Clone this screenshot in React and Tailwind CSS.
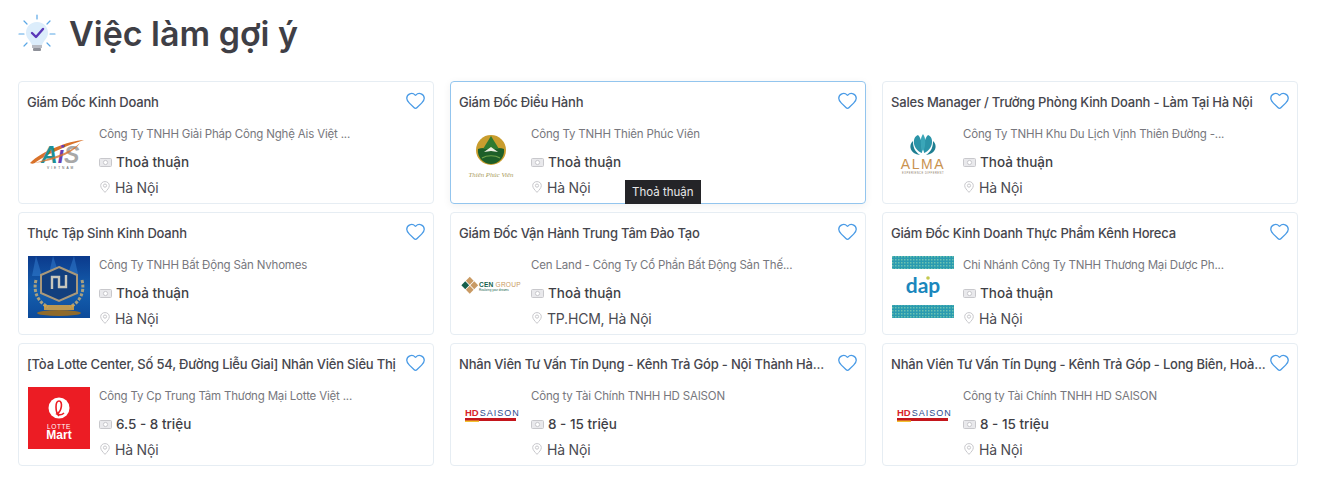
import { Heart } from "lucide-react";

const AisLogo = () => (
  <svg viewBox="0 0 62 62" className="h-full w-full">
    <path d="M2 38 C 14 26, 40 16, 56 15 C 44 19, 20 28, 8 37 C 6 39, 4 39, 2 38Z" fill="#d9722a" />
    <text x="13" y="38" fontFamily="Liberation Sans" fontStyle="italic" fontWeight="700" fontSize="23">
      <tspan fill="#1f8f96">A</tspan>
      <tspan fill="#6a3fb0">i</tspan>
      <tspan fill="#a8a8a8">S</tspan>
    </text>
    <path d="M6 38 C 20 34, 42 28, 52 18 C 46 28, 26 36, 6 38Z" fill="#d9722a" opacity="0.8" />
    <text x="19" y="44" fontFamily="Liberation Sans" fontSize="3.2" letterSpacing="2" fill="#555">VIETNAM</text>
  </svg>
);

const ThienPhucLogo = () => (
  <svg viewBox="0 0 62 62" className="h-full w-full">
    <circle cx="31" cy="25" r="15" fill="#c99d2e" />
    <path d="M18 24 C 24 22, 38 22, 44 24 C 45 32, 39 39, 31 39 C 23 39, 17 32, 18 24Z" fill="#1d5f28" />
    <path d="M31 11 L39 24 L23 24Z" fill="#2f7a30" />
    <path d="M24 27 L31 22 L38 27 L31 26Z" fill="#eef0e2" />
    <path d="M22 33 C 27 30, 35 30, 40 33" fill="none" stroke="#6fa24a" strokeWidth="1.2" />
    <text x="31" y="52" textAnchor="middle" fontFamily="Liberation Serif" fontStyle="italic" fontSize="6.8" fill="#a89a5a">Thiên Phúc Viên</text>
  </svg>
);

const AlmaLogo = () => (
  <svg viewBox="0 0 62 62" className="h-full w-full">
    <path d="M26 10 C 20 12, 20 24, 30 28 C 30 20, 30 14, 26 10Z M36 10 C 42 12, 42 24, 32 28 C 32 20, 32 14, 36 10Z" fill="#2b94a8" />
    <path d="M31 9 C 28 13, 28 20, 31 27 C 34 20, 34 13, 31 9Z" fill="#3aa6b8" />
    <path d="M21 16 C 16 20, 18 29, 28 30 C 22 26, 21 21, 21 16Z M41 16 C 46 20, 44 29, 34 30 C 40 26, 41 21, 41 16Z" fill="#1f7f92" />
    <text x="31" y="44" textAnchor="middle" fontFamily="Liberation Sans" fontSize="14" letterSpacing="1.6" fill="#c9924f">ALMA</text>
    <text x="31" y="49" textAnchor="middle" fontFamily="Liberation Sans" fontSize="2.6" letterSpacing="0.5" fill="#8a7a66">EXPERIENCE DIFFERENT</text>
  </svg>
);

const NvhomesLogo = () => (
  <svg viewBox="0 0 62 62" className="h-full w-full">
    <defs>
      <linearGradient id="nv-bg" x1="0" x2="0" y1="0" y2="1">
        <stop offset="0" stopColor="#0b3a8c" />
        <stop offset="0.55" stopColor="#155fae" />
        <stop offset="1" stopColor="#0c4a9a" />
      </linearGradient>
    </defs>
    <rect width="62" height="62" fill="url(#nv-bg)" />
    <path d="M8 0 L14 20 H4Z M25 0 L31 18 H21Z M46 0 L50 18 H40Z" fill="#3f8fe0" opacity="0.4" />
    <path d="M31 11 L49 19 V37 L31 45 L13 37 V19Z" fill="#123f7e" stroke="#a9987a" strokeWidth="2" />
    <path d="M24 33 V21 H31 V31 H38 V19" fill="none" stroke="#c7c6bc" strokeWidth="2.4" />
    <path d="M8 24 C 5 36, 10 46, 20 51 M54 24 C 57 36, 52 46, 42 51" fill="none" stroke="#a9a07f" strokeWidth="3" strokeDasharray="3 1.5" />
    <ellipse cx="31" cy="57" rx="22" ry="3" fill="#8f6a2a" />
    <rect x="16" y="49" width="30" height="5" fill="#d9a544" opacity="0.85" />
  </svg>
);

const CenLogo = () => (
  <svg viewBox="0 0 62 62" className="h-full w-full">
    <rect x="7" y="22" width="5.5" height="5.5" transform="rotate(45 9.75 24.75)" fill="#c99a63" />
    <rect x="2.5" y="26.5" width="5.5" height="5.5" transform="rotate(45 5.25 29.25)" fill="#155f4c" />
    <rect x="11.5" y="26.5" width="5.5" height="5.5" transform="rotate(45 14.25 29.25)" fill="#c99a63" />
    <rect x="7" y="31" width="5.5" height="5.5" transform="rotate(45 9.75 33.75)" fill="#c99a63" />
    <text x="19" y="31" fontFamily="Liberation Sans" fontSize="6.6" letterSpacing="0.2">
      <tspan fontWeight="700" fill="#155f4c">CEN </tspan>
      <tspan fill="#c99a63">GROUP</tspan>
    </text>
    <text x="19" y="35" fontFamily="Liberation Sans" fontSize="3" fill="#155f4c">Realizing your dreams</text>
  </svg>
);

const DapLogo = () => (
  <svg viewBox="0 0 62 62" className="h-full w-full">
    <defs>
      <pattern id="dap-dots" width="3" height="3" patternUnits="userSpaceOnUse">
        <rect width="3" height="3" fill="#2a9bb0" />
        <rect x="0" y="0" width="1.5" height="1.5" fill="#6cc2b0" />
      </pattern>
    </defs>
    <rect width="62" height="13" fill="url(#dap-dots)" />
    <rect y="49" width="62" height="13" fill="url(#dap-dots)" />
    <text x="31" y="37" textAnchor="middle" fontFamily="Lato" fontWeight="700" fontSize="21" fill="#1b87bd">dap</text>
    <circle cx="36" cy="22" r="1.8" fill="#c4c94f" />
  </svg>
);

const LotteLogo = () => (
  <svg viewBox="0 0 62 62" className="h-full w-full">
    <rect width="62" height="62" fill="#ec1c24" />
    <circle cx="31" cy="21" r="10.5" fill="#fff" />
    <path d="M31 29 C 27 25, 27 14, 31 14 C 35 14, 34 24, 29 27 C 31 28, 34 28, 36 26" fill="none" stroke="#ec1c24" strokeWidth="1.6" />
    <text x="31" y="42" textAnchor="middle" fontFamily="Liberation Sans" fontSize="6.5" letterSpacing="0.6" fill="#fff">LOTTE</text>
    <text x="31" y="52" textAnchor="middle" fontFamily="Liberation Sans" fontWeight="700" fontSize="12" fill="#fff">Mart</text>
  </svg>
);

const HdLogo = () => (
  <svg viewBox="0 0 62 62" className="h-full w-full">
    <text x="5" y="29" fontFamily="Liberation Sans" fontSize="9">
      <tspan fontWeight="700" fontSize="9.5" fill="#d8232a">HD</tspan>
      <tspan letterSpacing="1" fill="#2a4a8c" dx="1">SAISON</tspan>
    </text>
    <rect x="5" y="31" width="51" height="3" fill="#c4161c" />
    <rect x="5" y="33.5" width="14" height="1.5" fill="#f2c230" />
  </svg>
);

const BulbIcon = () => (
  <svg viewBox="0 0 38 40" className="h-[40px] w-[38px]">
    <g stroke="#5aa7e6" strokeWidth="1.2" strokeLinecap="round">
      <path d="M19 1 V5 M1 20 H6 M32 20 H37 M6 7 L9 10 M32 7 L29 10 M6 32 L9 29 M32 32 L29 29" />
    </g>
    <path d="M19 8 C 12 8, 8 13, 8 19 C 8 24, 12 26, 14 31 H24 C 26 26, 30 24, 30 19 C 30 13, 26 8, 19 8Z" fill="#dcedfb" />
    <rect x="14" y="31" width="10" height="3" fill="#b9bcc4" />
    <rect x="15" y="34" width="8" height="3" rx="1" fill="#8e9199" />
    <path d="M14 19 L18 23 L25 15" fill="none" stroke="#5a37b8" strokeWidth="2.4" strokeLinecap="round" strokeLinejoin="round" />
  </svg>
);

const MoneyIcon = () => (
  <svg viewBox="0 0 13 9" className="h-[9px] w-[13px] shrink-0" fill="none" stroke="#c8c8cc" strokeWidth="1">
    <rect x="0.5" y="0.5" width="12" height="8" rx="1" fill="#e9e9ec" />
    <circle cx="6.5" cy="4.5" r="2.1" fill="#fff" />
  </svg>
);

const PinIcon = () => (
  <svg viewBox="0 0 10 12" className="h-[12px] w-[10px] shrink-0" fill="none" stroke="#c8c8cc" strokeWidth="1">
    <path d="M5 11.4 C 2.8 8.8, 0.7 7, 0.7 4.6 C 0.7 2.2, 2.6 0.6, 5 0.6 C 7.4 0.6, 9.3 2.2, 9.3 4.6 C 9.3 7, 7.2 8.8, 5 11.4Z" />
    <circle cx="5" cy="4.6" r="1.6" />
  </svg>
);

const jobs = [
  { title: "Giám Đốc Kinh Doanh", company: "Công Ty TNHH Giải Pháp Công Nghệ Ais Việt ...", salary: "Thoả thuận", place: "Hà Nội", Logo: AisLogo },
  { title: "Giám Đốc Điều Hành", company: "Công Ty TNHH Thiên Phúc Viên", salary: "Thoả thuận", place: "Hà Nội", Logo: ThienPhucLogo, active: true },
  { title: "Sales Manager / Trưởng Phòng Kinh Doanh - Làm Tại Hà Nội", company: "Công Ty TNHH Khu Du Lịch Vịnh Thiên Đường -...", salary: "Thoả thuận", place: "Hà Nội", Logo: AlmaLogo },
  { title: "Thực Tập Sinh Kinh Doanh", company: "Công Ty TNHH Bất Động Sản Nvhomes", salary: "Thoả thuận", place: "Hà Nội", Logo: NvhomesLogo },
  { title: "Giám Đốc Vận Hành Trung Tâm Đào Tạo", company: "Cen Land - Công Ty Cổ Phần Bất Động Sản Thế...", salary: "Thoả thuận", place: "TP.HCM, Hà Nội", Logo: CenLogo },
  { title: "Giám Đốc Kinh Doanh Thực Phẩm Kênh Horeca", company: "Chi Nhánh Công Ty TNHH Thương Mại Dược Ph...", salary: "Thoả thuận", place: "Hà Nội", Logo: DapLogo },
  { title: "[Tòa Lotte Center, Số 54, Đường Liễu Giai] Nhân Viên Siêu Thị", company: "Công Ty Cp Trung Tâm Thương Mại Lotte Việt ...", salary: "6.5 - 8 triệu", place: "Hà Nội", Logo: LotteLogo },
  { title: "Nhân Viên Tư Vấn Tín Dụng - Kênh Trả Góp - Nội Thành Hà...", company: "Công ty Tài Chính TNHH HD SAISON", salary: "8 - 15 triệu", place: "Hà Nội", Logo: HdLogo },
  { title: "Nhân Viên Tư Vấn Tín Dụng - Kênh Trả Góp - Long Biên, Hoà...", company: "Công ty Tài Chính TNHH HD SAISON", salary: "8 - 15 triệu", place: "Hà Nội", Logo: HdLogo },
];

function JobCard({ job }) {
  const { Logo } = job;

  return (
    <div
      className={`relative h-[123px] rounded-[4px] border px-[8px] ${
        job.active
          ? "border-[#93c5ee] shadow-[0_2px_8px_rgba(0,0,0,0.06)]"
          : "border-[#e6edf3]"
      }`}
    >
      <div className="flex h-[43px] items-start justify-between">
        <h3 className="mt-[10px] w-[372px] whitespace-nowrap text-[13px] leading-[20px] font-medium tracking-[-0.2px] text-[#46464d]">
          {job.title}
        </h3>
        <Heart className="mt-[8px] mr-[-1px] h-[21px] w-[21px] text-[#4a9be6]" strokeWidth={1.5} />
      </div>

      <div className="ml-px flex gap-[9px]">
        <div className="h-[62px] w-[62px] shrink-0">
          <Logo />
        </div>
        <div>
          <p className="text-[11.5px] leading-[18px] tracking-[-0.18px] text-[#77777d]">{job.company}</p>
          <div className="mt-[7px] flex h-[24px] items-center gap-[4px]">
            <MoneyIcon />
            <span className="text-[13.5px] font-medium text-[#3f3f46]">{job.salary}</span>
          </div>
          <div className="flex h-[26px] items-center gap-[5px] pl-px">
            <PinIcon />
            <span className="text-[14px] tracking-[-0.2px] text-[#4b4b52]">{job.place}</span>
          </div>
        </div>
      </div>

      {job.active && (
        <div className="absolute bottom-[-1px] left-[174px] bg-[#242428] px-[7px] py-[3px] text-[11.5px] leading-[18px] text-[#e8e8e8]">
          Thoả thuận
        </div>
      )}
    </div>
  );
}

export default function App() {
  return (
    <div className="min-h-[487px] bg-white pr-[19px] pl-[18px] font-['Inter',sans-serif]">
      {/* Header */}
      <div className="flex h-[81px] items-start">
        <div className="mt-[14px] flex items-center gap-[13px]">
          <BulbIcon />
          <h2 className="text-[34px] leading-[40px] font-semibold text-[#3f3f46]">
            Việc làm gợi ý
          </h2>
        </div>
      </div>

      {/* Job grid */}
      <div className="grid grid-cols-3 gap-x-[16px] gap-y-[8px]">
        {jobs.map((job) => (
          <JobCard key={job.title} job={job} />
        ))}
      </div>
    </div>
  );
}
